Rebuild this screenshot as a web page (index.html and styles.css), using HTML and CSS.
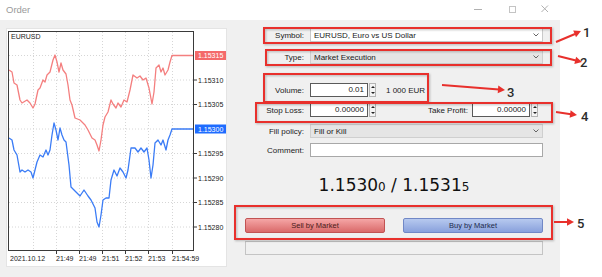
FILE: index.html
```html
<!DOCTYPE html>
<html>
<head>
<meta charset="utf-8">
<title>Order</title>
<link rel="stylesheet" href="styles.css">
</head>
<body>
<div class="window">
  <div class="titlebar">
    <span class="title">Order</span>
    <svg class="controls" width="78" height="20" viewBox="0 0 78 20">
      <line x1="2" y1="9.5" x2="10" y2="9.5" stroke="#b0b0b0" stroke-width="1"/>
      <rect x="37.5" y="6.5" width="6" height="6" fill="none" stroke="#c4c4c4"/>
      <path d="M69.5 5.5 L76 12 M76 5.5 L69.5 12" stroke="#b0b0b0" stroke-width="1"/>
    </svg>
  </div>
  <div class="body">
    <div class="chart-panel">
      <svg class="chart" width="221" height="239" viewBox="6 28 221 239">
        <rect x="6.5" y="28.5" width="220" height="238" fill="#fff" stroke="#e4e4e4"/>
        <g stroke="#d6d6d6" stroke-dasharray="1 2" stroke-width="1">
          <line x1="9" y1="55.5" x2="193" y2="55.5"/>
          <line x1="9" y1="80" x2="193" y2="80"/>
          <line x1="9" y1="104.5" x2="193" y2="104.5"/>
          <line x1="9" y1="129" x2="193" y2="129"/>
          <line x1="9" y1="153.5" x2="193" y2="153.5"/>
          <line x1="9" y1="178" x2="193" y2="178"/>
          <line x1="9" y1="202.5" x2="193" y2="202.5"/>
          <line x1="9" y1="227" x2="193" y2="227"/>
          <line x1="33.5" y1="32" x2="33.5" y2="250"/>
          <line x1="56.5" y1="32" x2="56.5" y2="250"/>
          <line x1="79.5" y1="32" x2="79.5" y2="250"/>
          <line x1="102.5" y1="32" x2="102.5" y2="250"/>
          <line x1="125.5" y1="32" x2="125.5" y2="250"/>
          <line x1="148.5" y1="32" x2="148.5" y2="250"/>
          <line x1="172.5" y1="32" x2="172.5" y2="250"/>
        </g>
        <polyline fill="none" stroke="#f47f7f" stroke-width="1.3" stroke-linejoin="round" points="9,70 12,72 14,83 17,85 20,100 22,103 27,100 30,103 33,108 35,104 38,90 40,88 43,80 45,82 47,75 50,72 53,60 55,55 57,62 59,72 61,63 63,70 66,74 68,85 70,100 72,105 75,118 80,120 85,125 88,130 92,138 95,140 97,145 99,151 101,140 103,125 105,117 108,112 111,100 113,104 116,108 118,103 121,107 124,100 127,102 130,90 133,75 137,78 140,76 143,80 146,78 149,88 152,104 154,92 156,68 159,65 161,72 163,68 165,75 168,70 170,62 172,55.5 194,55.5"/>
        <polyline fill="none" stroke="#3b7cf6" stroke-width="1.3" stroke-linejoin="round" points="9,138 12,140 14,150 17,155 20,172 22,170 25,172 28,170 31,172 33,178 35,170 37,162 40,155 43,157 46,150 48,155 50,150 52,135 54,123 56,130 58,140 60,128 62,135 64,140 66,142 69,165 71,187 76,192 80,196 84,190 88,196 91,200 95,208 97,222 99,227 101,215 103,200 106,198 109,198 111,180 114,170 117,176 120,168 123,172 126,178 128,170 131,148 135,148 138,152 141,148 144,152 147,148 149,160 151,178 153,165 155,143 158,140 161,145 163,140 166,150 168,140 170,135 172,129 194,129"/>
        <rect x="8.5" y="31.5" width="185" height="219" fill="none" stroke="#3a3a3a"/>
        <g stroke="#3a3a3a">
          <line x1="194" y1="80" x2="197" y2="80"/>
          <line x1="194" y1="104.5" x2="197" y2="104.5"/>
          <line x1="194" y1="153.5" x2="197" y2="153.5"/>
          <line x1="194" y1="178" x2="197" y2="178"/>
          <line x1="194" y1="202.5" x2="197" y2="202.5"/>
          <line x1="194" y1="227" x2="197" y2="227"/>
          <line x1="56.5" y1="251" x2="56.5" y2="254"/>
          <line x1="79.5" y1="251" x2="79.5" y2="254"/>
          <line x1="102.5" y1="251" x2="102.5" y2="254"/>
          <line x1="125.5" y1="251" x2="125.5" y2="254"/>
          <line x1="148.5" y1="251" x2="148.5" y2="254"/>
          <line x1="172.5" y1="251" x2="172.5" y2="254"/>
        </g>
        <rect x="195" y="51" width="31" height="9" fill="#f46a6a"/>
        <rect x="195" y="124.5" width="31" height="9" fill="#1e6cff"/>
        <g class="axis">
          <text x="198" y="58.3" fill="#fff">1.15315</text>
          <text x="198" y="82.5">1.15310</text>
          <text x="198" y="107">1.15305</text>
          <text x="198" y="131.8" fill="#fff">1.15300</text>
          <text x="198" y="156">1.15295</text>
          <text x="198" y="180.5">1.15290</text>
          <text x="198" y="205">1.15285</text>
          <text x="198" y="229.5">1.15280</text>
          <text x="10" y="261">2021.10.12</text>
          <text x="56" y="261">21:49</text>
          <text x="79" y="261">21:49</text>
          <text x="102" y="261">21:51</text>
          <text x="125" y="261">21:52</text>
          <text x="148" y="261">21:53</text>
          <text x="172" y="261">21:54:59</text>
          <text x="11" y="38.5">EURUSD</text>
        </g>
      </svg>
    </div>
    <div class="form">
      <div class="row r-symbol">
        <span class="lbl">Symbol:</span>
        <div class="select white">
          <span class="val">EURUSD, Euro vs US Dollar</span>
          <svg class="chev" width="6" height="4" viewBox="0 0 6 4"><path d="M0.5 0.5 L3 3 L5.5 0.5" fill="none" stroke="#666"/></svg>
        </div>
      </div>
      <div class="row r-type">
        <span class="lbl">Type:</span>
        <div class="select grey">
          <span class="val">Market Execution</span>
          <svg class="chev" width="6" height="4" viewBox="0 0 6 4"><path d="M0.5 0.5 L3 3 L5.5 0.5" fill="none" stroke="#666"/></svg>
        </div>
      </div>
      <div class="row r-volume">
        <span class="lbl">Volume:</span>
        <div class="ctrl">
          <span class="input">0.01</span>
          <span class="spin"><i class="up"></i><i class="dn"></i></span>
          <span class="note">1 000 EUR</span>
        </div>
      </div>
      <div class="row r-sl">
        <span class="lbl">Stop Loss:</span>
        <div class="ctrl">
          <span class="input">0.00000</span>
          <span class="spin"><i class="up"></i><i class="dn"></i></span>
          <span class="lbl tp">Take Profit:</span>
          <span class="input">0.00000</span>
          <span class="spin"><i class="up"></i><i class="dn"></i></span>
        </div>
      </div>
      <div class="row r-fill">
        <span class="lbl">Fill policy:</span>
        <div class="select grey">
          <span class="val">Fill or Kill</span>
          <svg class="chev" width="6" height="4" viewBox="0 0 6 4"><path d="M0.5 0.5 L3 3 L5.5 0.5" fill="none" stroke="#666"/></svg>
        </div>
      </div>
      <div class="row r-comment">
        <span class="lbl">Comment:</span>
        <div class="text-input"></div>
      </div>
      <div class="price"><span>1.1530</span><small>0</small> / <span>1.1531</span><small>5</small></div>
      <div class="buttons">
        <div class="btn sell">Sell by Market</div>
        <div class="btn buy">Buy by Market</div>
      </div>
      <div class="progress"></div>
    </div>
  </div>
  <svg class="annot" width="602" height="277" viewBox="0 0 602 277">
    <g class="boxes" fill="none" stroke="#e8302c" stroke-width="2">
      <rect x="264" y="28" width="287" height="15"/>
      <rect x="266" y="50" width="285" height="15"/>
      <rect x="264" y="74" width="164" height="28"/>
      <rect x="256" y="103" width="296" height="19"/>
      <rect x="235" y="206" width="317" height="33"/>
    </g>
    <g stroke="#e8302c" stroke-width="2" fill="#e8302c">
      <line x1="556" y1="42" x2="575" y2="34"/>
      <polygon points="581,31 576,37.2 573.2,30.4" stroke="none"/>
      <line x1="558" y1="56" x2="576" y2="60.5"/>
      <polygon points="582,62 574.3,63.9 576.1,56.7" stroke="none"/>
      <line x1="442" y1="85" x2="499" y2="89.5"/>
      <polygon points="505,90 497.7,93.3 498.3,85.6" stroke="none"/>
      <line x1="556" y1="112" x2="571" y2="114.2"/>
      <polygon points="577,115 569.6,117.8 570.6,110.3" stroke="none"/>
      <line x1="554" y1="222" x2="568" y2="222"/>
      <polygon points="574,222 567,225.7 567,218.3" stroke="none"/>
    </g>
    <g class="nums">
      <text x="583" y="37">1</text>
      <text x="580" y="67">2</text>
      <text x="507" y="97">3</text>
      <text x="581" y="121">4</text>
      <text x="577" y="228">5</text>
    </g>
  </svg>
</div>
</body>
</html>
```
FILE: styles.css
```css
* { box-sizing: border-box; }
html, body { margin: 0; padding: 0; background: #fff; }
body {
  font-family: "Liberation Sans", Arial, sans-serif;
  font-size: 8px;
  color: #1a1a1a;
}
.window {
  position: relative;
  width: 602px;
  height: 277px;
  overflow: hidden;
  background: #fff;
}
.titlebar {
  height: 20px;
  display: flex;
  align-items: center;
  padding-left: 6px;
}
.title {
  font-size: 9.5px;
  color: #9a9a9a;
  margin-top: -2px;
}
.controls {
  margin-left: auto;
  margin-right: 52px;
  display: block;
}
.body {
  width: 560px;
  height: 257px;
  background: #f0f0f0;
  display: flex;
  align-items: flex-start;
  padding: 8px 0 0 6px;
}
.chart-panel {
  width: 221px;
  height: 239px;
  flex: none;
}
.chart { display: block; }
.chart .axis text {
  font-family: "Liberation Sans", Arial, sans-serif;
  font-size: 7px;
  fill: #222;
}
.chart .axis text[fill="#fff"] { fill: #fff; }

.form {
  margin-left: 6px;
  width: 310px;
  display: flex;
  flex-direction: column;
}
.row {
  display: grid;
  grid-template-columns: 71px 1fr;
  column-gap: 6px;
  align-items: center;
  height: 14px;
}
.r-type { margin-top: 8px; }
.r-volume { margin-top: 19px; }
.r-sl { margin-top: 6px; }
.r-fill { margin-top: 7px; }
.r-comment { margin-top: 5px; }
.lbl {
  text-align: right;
  white-space: nowrap;
  color: #1a1a1a;
}
.select {
  height: 14px;
  display: flex;
  align-items: center;
  padding-left: 3px;
  border: 1px solid #c9c9c9;
}
.select.white { background: #fff; }
.select.grey { background: #e5e5e5; border-color: #cfcfcf; }
.select .val { flex: 1; white-space: nowrap; }
.chev { margin-right: 3px; display: block; }
.ctrl {
  display: flex;
  align-items: center;
  height: 14px;
  padding-right: 5px;
}
.input {
  width: 58px;
  height: 14px;
  background: #fff;
  border: 1px solid #5a5a5a;
  text-align: right;
  padding-right: 3px;
  line-height: 12px;
}
.spin {
  width: 7px;
  height: 14px;
  margin-left: 1px;
  border: 1px solid #b4b4b4;
  background: #f4f4f4;
  display: flex;
  flex-direction: column;
  align-items: center;
  justify-content: space-around;
}
.spin i {
  display: block;
  width: 0;
  height: 0;
  border-left: 2px solid transparent;
  border-right: 2px solid transparent;
}
.spin .up { border-bottom: 2px solid #222; }
.spin .dn { border-top: 2px solid #222; }
.note { margin-left: 10px; white-space: nowrap; }
.tp { margin-left: auto; margin-right: 4px; }
.text-input {
  height: 14px;
  background: #fff;
  border: 1px solid #a8a8a8;
}
.price {
  margin-top: 18px;
  margin-left: 12px;
  height: 20px;
  line-height: 20px;
  text-align: center;
  font-family: "DejaVu Sans", Verdana, sans-serif;
  font-size: 17px;
  color: #111;
  white-space: nowrap;
}
.price small { font-size: 12px; }
.buttons {
  margin-top: 23px;
  margin-left: 12px;
  display: flex;
  gap: 18px;
}
.btn {
  width: 140px;
  height: 15px;
  border-radius: 2px;
  display: flex;
  align-items: center;
  justify-content: center;
  font-size: 7.5px;
}
.sell {
  background: linear-gradient(#f5a6a6, #da6a6a);
  border: 1px solid #c25353;
  color: #4a1a1a;
}
.buy {
  background: linear-gradient(#b7c9ef, #89a1dc);
  border: 1px solid #7188c6;
  color: #1c2a4c;
}
.progress {
  margin-top: 8px;
  margin-left: 12px;
  width: 298px;
  height: 14px;
  border: 1px solid #c4c4c4;
}
.annot {
  position: absolute;
  top: 0;
  left: 0;
  pointer-events: none;
}
.annot .boxes { filter: drop-shadow(1px 1px 1px rgba(0,0,0,0.25)); }
.annot .nums text {
  font-family: Roboto, "Liberation Sans", sans-serif;
  font-weight: 500;
  font-size: 13px;
  fill: #2b2b2b;
}
```
